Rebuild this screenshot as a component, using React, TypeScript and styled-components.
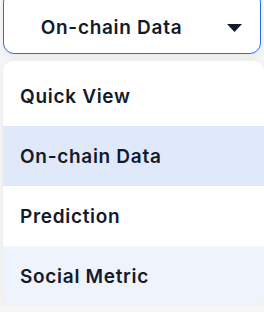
import React from 'react'
import styled, { createGlobalStyle } from 'styled-components'

const GlobalStyle = createGlobalStyle`
  html, body {
    margin: 0;
    padding: 0;
    background: #f6f6f6;
    font-family: Inter, 'Noto Sans', sans-serif;
    overflow: hidden;
  }
`

const Wrapper = styled.div`
  display: flex;
  flex-direction: column;
  gap: 7px;
  width: 258px;
  padding-left: 3px;
`

const Trigger = styled.button`
  display: flex;
  align-items: center;
  height: 63px;
  margin-top: -9px;
  padding: 9px 18px 0 0;
  background: #fff;
  border: 1px solid #2a6cf0;
  border-radius: 11px;
  font-family: inherit;
  box-shadow: 0 6px 10px rgba(0, 0, 0, 0.04);
`

const TriggerLabel = styled.span`
  flex: 1;
  padding-right: 8px;
  text-align: center;
  font-size: 19px;
  font-weight: 600;
  letter-spacing: 0.7px;
  color: #131a2b;
`

const Caret = styled.svg`
  width: 15px;
  height: 8px;
  margin-top: 1px;
`

const Menu = styled.ul`
  list-style: none;
  margin: 0;
  padding: 0;
  width: 261px;
  background: #fff;
  border-radius: 11px;
  overflow: hidden;
  box-shadow: 0 2px 8px rgba(0, 0, 0, 0.06);
`

type ItemProps = {
  $tone?: 'active' | 'hover'
  $first?: boolean
}

const Item = styled.li<ItemProps>`
  display: flex;
  align-items: center;
  height: 60px;
  padding: ${({ $first }) => ($first ? '5px' : '0')} 0 0 17px;
  font-size: 19px;
  font-weight: 600;
  letter-spacing: 0.7px;
  color: #131a2b;
  background: ${({ $tone }) =>
    $tone === 'active' ? '#e0e9fa' : $tone === 'hover' ? '#eef3fc' : '#fff'};
`

const items: { label: string; tone?: 'active' | 'hover' }[] = [
  { label: 'Quick View' },
  { label: 'On-chain Data', tone: 'active' },
  { label: 'Prediction' },
  { label: 'Social Metric', tone: 'hover' }
]

export default function App() {
  return (
    <>
      <GlobalStyle />
      <Wrapper>
        <Trigger>
          <TriggerLabel>On-chain Data</TriggerLabel>
          <Caret viewBox="0 0 15 8">
            <path d="M0 0h15L7.5 8z" fill="#131a2b" />
          </Caret>
        </Trigger>
        <Menu>
          {items.map((item, i) => (
            <Item key={item.label} $tone={item.tone} $first={i === 0}>
              {item.label}
            </Item>
          ))}
        </Menu>
      </Wrapper>
    </>
  )
}
